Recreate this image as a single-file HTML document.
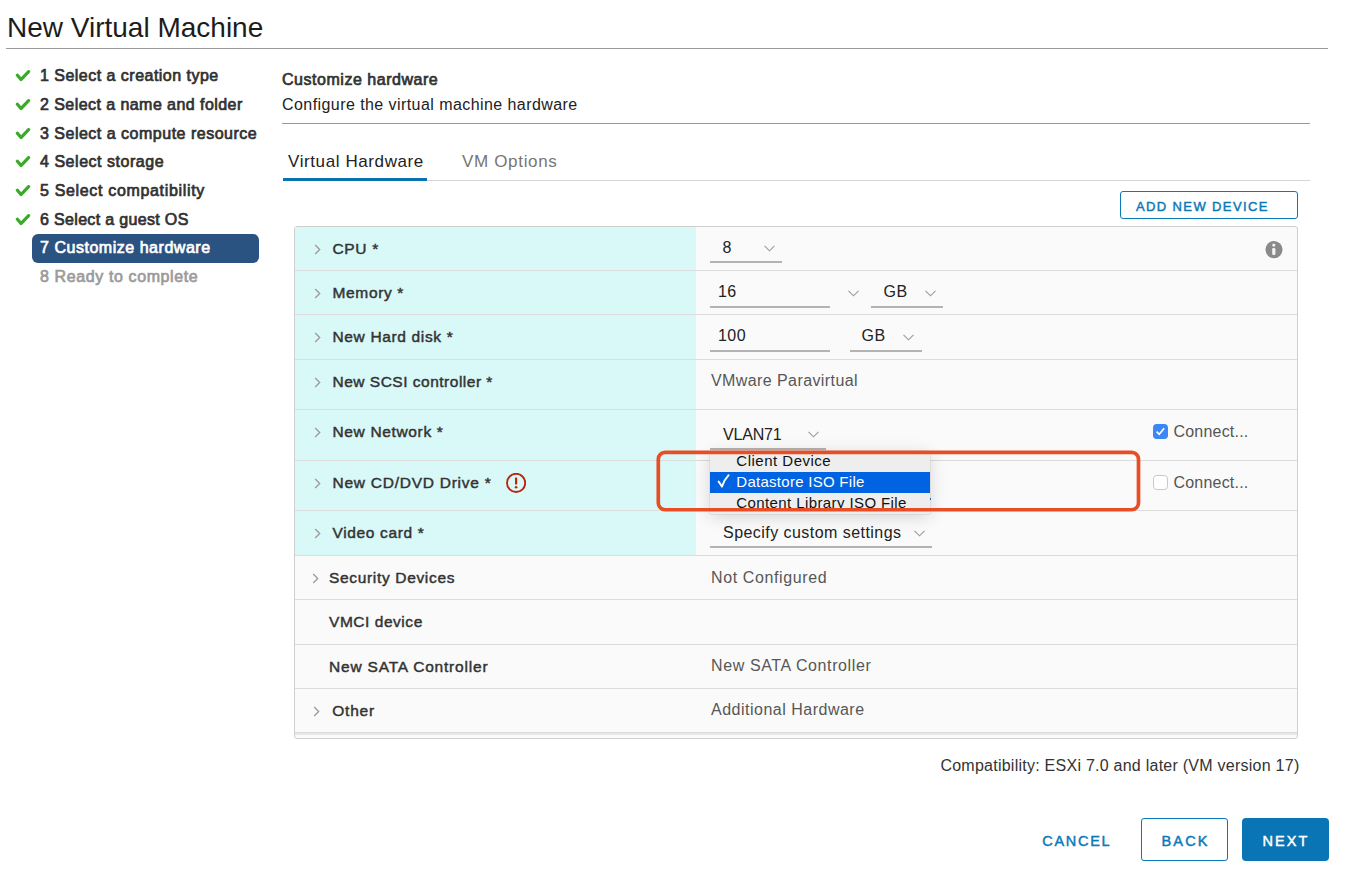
<!DOCTYPE html>
<html><head><meta charset="utf-8"><style>
html,body{margin:0;padding:0;width:1350px;height:877px;overflow:hidden;background:#fff;}
body{position:relative;font-family:"Liberation Sans", sans-serif;}
.t{position:absolute;white-space:nowrap;line-height:1;}
.r{position:absolute;}
</style></head><body>
<div class="t " style="left:7px;top:13.50px;font-size:28px;color:#1c1c1c;">New Virtual Machine</div>
<div class="r" style="left:6px;top:48px;width:1322px;height:1px;background:#9a9a9a"></div>
<div class="r" style="left:32px;top:234px;width:227px;height:28.8px;background:#2b5381;border-radius:6px"></div>
<div class="t nav" style="left:40px;top:68.16px;font-size:16px;font-weight:400;-webkit-text-stroke:0.7px currentColor;color:#313131;letter-spacing:0.479px;">1 Select a creation type</div>
<svg class="r" style="left:15px;top:70.3px" width="16" height="12" viewBox="0 0 16 12"><path d="M2.4 5.2 L6 9.6 L13.6 1.6" fill="none" stroke="#3aab28" stroke-width="3.2" stroke-linejoin="round" stroke-linecap="round"/></svg>
<div class="t nav" style="left:40px;top:96.86px;font-size:16px;font-weight:400;-webkit-text-stroke:0.7px currentColor;color:#313131;letter-spacing:0.44px;">2 Select a name and folder</div>
<svg class="r" style="left:15px;top:99.0px" width="16" height="12" viewBox="0 0 16 12"><path d="M2.4 5.2 L6 9.6 L13.6 1.6" fill="none" stroke="#3aab28" stroke-width="3.2" stroke-linejoin="round" stroke-linecap="round"/></svg>
<div class="t nav" style="left:40px;top:125.56px;font-size:16px;font-weight:400;-webkit-text-stroke:0.7px currentColor;color:#313131;letter-spacing:0.5px;">3 Select a compute resource</div>
<svg class="r" style="left:15px;top:127.7px" width="16" height="12" viewBox="0 0 16 12"><path d="M2.4 5.2 L6 9.6 L13.6 1.6" fill="none" stroke="#3aab28" stroke-width="3.2" stroke-linejoin="round" stroke-linecap="round"/></svg>
<div class="t nav" style="left:40px;top:154.26px;font-size:16px;font-weight:400;-webkit-text-stroke:0.7px currentColor;color:#313131;letter-spacing:0.533px;">4 Select storage</div>
<svg class="r" style="left:15px;top:156.4px" width="16" height="12" viewBox="0 0 16 12"><path d="M2.4 5.2 L6 9.6 L13.6 1.6" fill="none" stroke="#3aab28" stroke-width="3.2" stroke-linejoin="round" stroke-linecap="round"/></svg>
<div class="t nav" style="left:40px;top:182.96px;font-size:16px;font-weight:400;-webkit-text-stroke:0.7px currentColor;color:#313131;letter-spacing:0.667px;">5 Select compatibility</div>
<svg class="r" style="left:15px;top:185.1px" width="16" height="12" viewBox="0 0 16 12"><path d="M2.4 5.2 L6 9.6 L13.6 1.6" fill="none" stroke="#3aab28" stroke-width="3.2" stroke-linejoin="round" stroke-linecap="round"/></svg>
<div class="t nav" style="left:40px;top:211.66px;font-size:16px;font-weight:400;-webkit-text-stroke:0.7px currentColor;color:#313131;letter-spacing:0.334px;">6 Select a guest OS</div>
<svg class="r" style="left:15px;top:213.8px" width="16" height="12" viewBox="0 0 16 12"><path d="M2.4 5.2 L6 9.6 L13.6 1.6" fill="none" stroke="#3aab28" stroke-width="3.2" stroke-linejoin="round" stroke-linecap="round"/></svg>
<div class="t nav" style="left:40px;top:240.36px;font-size:16px;font-weight:400;-webkit-text-stroke:0.7px currentColor;color:#fff;letter-spacing:0.526px;">7 Customize hardware</div>
<div class="t nav" style="left:40px;top:269.06px;font-size:16px;font-weight:400;-webkit-text-stroke:0.7px currentColor;color:#9b9b9b;letter-spacing:0.61px;">8 Ready to complete</div>
<div class="t hdr" style="left:282px;top:72.36px;font-size:16px;font-weight:400;-webkit-text-stroke:0.7px currentColor;color:#333;letter-spacing:0.53px;">Customize hardware</div>
<div class="t sub" style="left:282px;top:97.16px;font-size:16px;color:#222;letter-spacing:0.432px;">Configure the virtual machine hardware</div>
<div class="r" style="left:282px;top:123px;width:1028px;height:1px;background:#9a9a9a"></div>
<div class="t tab1" style="left:288px;top:153.41px;font-size:17px;color:#222;letter-spacing:0.6px;">Virtual Hardware</div>
<div class="t tab2" style="left:462px;top:153.41px;font-size:17px;color:#767676;letter-spacing:0.667px;">VM Options</div>
<div class="r" style="left:283px;top:180px;width:1027px;height:1px;background:#d6d6d6"></div>
<div class="r" style="left:283px;top:178px;width:144px;height:3px;background:#0a72b0"></div>
<div class="r" style="left:1120px;top:191px;width:178px;height:28px;border:1px solid #0a79b8;border-radius:3px;box-sizing:border-box;background:#fff"></div>
<div class="t btn" style="left:1136px;top:199.50px;font-size:13px;font-weight:400;-webkit-text-stroke:0.45px currentColor;color:#0a79b8;letter-spacing:1.385px;">ADD NEW DEVICE</div>
<div class="r" style="left:294px;top:226px;width:1004px;height:513px;border:1px solid #cfcfcf;border-radius:3px;box-sizing:border-box;background:#fafafa"></div>
<div class="r" style="left:295px;top:227px;width:401px;height:328px;background:#d9f8f8"></div>
<div class="r" style="left:295px;top:270px;width:1002px;height:1px;background:#dcdcdc"></div>
<div class="r" style="left:295px;top:314px;width:1002px;height:1px;background:#dcdcdc"></div>
<div class="r" style="left:295px;top:359px;width:1002px;height:1px;background:#dcdcdc"></div>
<div class="r" style="left:295px;top:409px;width:1002px;height:1px;background:#dcdcdc"></div>
<div class="r" style="left:295px;top:460px;width:1002px;height:1px;background:#dcdcdc"></div>
<div class="r" style="left:295px;top:510px;width:1002px;height:1px;background:#dcdcdc"></div>
<div class="r" style="left:295px;top:555px;width:1002px;height:1px;background:#dcdcdc"></div>
<div class="r" style="left:295px;top:599px;width:1002px;height:1px;background:#dcdcdc"></div>
<div class="r" style="left:295px;top:644px;width:1002px;height:1px;background:#dcdcdc"></div>
<div class="r" style="left:295px;top:688px;width:1002px;height:1px;background:#dcdcdc"></div>
<div class="r" style="left:295px;top:732px;width:1002px;height:1px;background:#dcdcdc"></div>
<div class="r" style="left:295px;top:733px;width:1002px;height:1.5px;background:#e8e8e8"></div>
<div class="t lab" style="left:332.5px;top:240.78px;font-size:15.5px;font-weight:400;-webkit-text-stroke:0.45px currentColor;color:#333;letter-spacing:0.65px;">CPU *</div>
<svg class="r" style="left:313.5px;top:244px" width="7" height="11" viewBox="0 0 7 11"><path d="M1.2 1 L5.7 5.5 L1.2 10" fill="none" stroke="#9a9a9a" stroke-width="1.3"/></svg>
<div class="t lab" style="left:332.5px;top:284.78px;font-size:15.5px;font-weight:400;-webkit-text-stroke:0.45px currentColor;color:#333;letter-spacing:0.65px;">Memory *</div>
<svg class="r" style="left:313.5px;top:288px" width="7" height="11" viewBox="0 0 7 11"><path d="M1.2 1 L5.7 5.5 L1.2 10" fill="none" stroke="#9a9a9a" stroke-width="1.3"/></svg>
<div class="t lab" style="left:332.5px;top:328.78px;font-size:15.5px;font-weight:400;-webkit-text-stroke:0.45px currentColor;color:#333;letter-spacing:0.65px;">New Hard disk *</div>
<svg class="r" style="left:313.5px;top:332px" width="7" height="11" viewBox="0 0 7 11"><path d="M1.2 1 L5.7 5.5 L1.2 10" fill="none" stroke="#9a9a9a" stroke-width="1.3"/></svg>
<div class="t lab" style="left:332.5px;top:373.78px;font-size:15.5px;font-weight:400;-webkit-text-stroke:0.45px currentColor;color:#333;letter-spacing:0.5px;">New SCSI controller *</div>
<svg class="r" style="left:313.5px;top:377px" width="7" height="11" viewBox="0 0 7 11"><path d="M1.2 1 L5.7 5.5 L1.2 10" fill="none" stroke="#9a9a9a" stroke-width="1.3"/></svg>
<div class="t lab" style="left:332.5px;top:423.78px;font-size:15.5px;font-weight:400;-webkit-text-stroke:0.45px currentColor;color:#333;letter-spacing:0.65px;">New Network *</div>
<svg class="r" style="left:313.5px;top:427px" width="7" height="11" viewBox="0 0 7 11"><path d="M1.2 1 L5.7 5.5 L1.2 10" fill="none" stroke="#9a9a9a" stroke-width="1.3"/></svg>
<div class="t lab" style="left:332.5px;top:474.78px;font-size:15.5px;font-weight:400;-webkit-text-stroke:0.45px currentColor;color:#333;letter-spacing:0.746px;">New CD/DVD Drive *</div>
<svg class="r" style="left:313.5px;top:478px" width="7" height="11" viewBox="0 0 7 11"><path d="M1.2 1 L5.7 5.5 L1.2 10" fill="none" stroke="#9a9a9a" stroke-width="1.3"/></svg>
<div class="t lab" style="left:332.5px;top:524.78px;font-size:15.5px;font-weight:400;-webkit-text-stroke:0.45px currentColor;color:#333;letter-spacing:0.65px;">Video card *</div>
<svg class="r" style="left:313.5px;top:528px" width="7" height="11" viewBox="0 0 7 11"><path d="M1.2 1 L5.7 5.5 L1.2 10" fill="none" stroke="#9a9a9a" stroke-width="1.3"/></svg>
<div class="t lab" style="left:329px;top:569.78px;font-size:15.5px;font-weight:400;-webkit-text-stroke:0.45px currentColor;color:#333;letter-spacing:0.667px;">Security Devices</div>
<svg class="r" style="left:312.2px;top:573px" width="7" height="11" viewBox="0 0 7 11"><path d="M1.2 1 L5.7 5.5 L1.2 10" fill="none" stroke="#9a9a9a" stroke-width="1.3"/></svg>
<div class="t lab" style="left:329px;top:613.78px;font-size:15.5px;font-weight:400;-webkit-text-stroke:0.45px currentColor;color:#333;letter-spacing:0.54px;">VMCI device</div>
<div class="t lab" style="left:329px;top:658.78px;font-size:15.5px;font-weight:400;-webkit-text-stroke:0.45px currentColor;color:#333;letter-spacing:0.8px;">New SATA Controller</div>
<div class="t lab" style="left:332.3px;top:702.78px;font-size:15.5px;font-weight:400;-webkit-text-stroke:0.45px currentColor;color:#333;letter-spacing:0.75px;">Other</div>
<svg class="r" style="left:313.4px;top:706px" width="7" height="11" viewBox="0 0 7 11"><path d="M1.2 1 L5.7 5.5 L1.2 10" fill="none" stroke="#9a9a9a" stroke-width="1.3"/></svg>
<div class="t " style="left:722.4px;top:240.26px;font-size:16px;color:#222;letter-spacing:0.45px;">8</div>
<svg class="r" style="left:764px;top:245px" width="11" height="7" viewBox="0 0 11 7"><path d="M0.5 0.8 L5.5 5.8 L10.5 0.8" fill="none" stroke="#9c9c9c" stroke-width="1.1"/></svg>
<div class="r" style="left:710px;top:261px;width:72px;height:2px;background:#b3b3b3"></div>
<svg class="r" style="left:1265px;top:241px" width="18" height="18" viewBox="0 0 18 18"><circle cx="9" cy="8.6" r="8.55" fill="#8a8a8a"/><circle cx="8.8" cy="4.1" r="1.6" fill="#f2f2f2"/><rect x="7.2" y="7.1" width="3.2" height="6.8" rx="1.2" fill="#f2f2f2"/></svg>
<div class="t " style="left:718px;top:284.26px;font-size:16px;color:#222;letter-spacing:0.45px;">16</div>
<div class="r" style="left:710px;top:305.5px;width:120px;height:2px;background:#b3b3b3"></div>
<svg class="r" style="left:847.5px;top:289.5px" width="11" height="7" viewBox="0 0 11 7"><path d="M0.5 0.8 L5.5 5.8 L10.5 0.8" fill="none" stroke="#9c9c9c" stroke-width="1.1"/></svg>
<div class="t " style="left:883.6px;top:284.26px;font-size:16px;color:#222;letter-spacing:0.45px;">GB</div>
<svg class="r" style="left:924.5px;top:289.5px" width="11" height="7" viewBox="0 0 11 7"><path d="M0.5 0.8 L5.5 5.8 L10.5 0.8" fill="none" stroke="#9c9c9c" stroke-width="1.1"/></svg>
<div class="r" style="left:871px;top:305.5px;width:72px;height:2px;background:#b3b3b3"></div>
<div class="t " style="left:718px;top:328.36px;font-size:16px;color:#222;letter-spacing:0.45px;">100</div>
<div class="r" style="left:710px;top:349.5px;width:120px;height:2px;background:#b3b3b3"></div>
<div class="t " style="left:861.6px;top:328.36px;font-size:16px;color:#222;letter-spacing:0.45px;">GB</div>
<svg class="r" style="left:903px;top:333.5px" width="11" height="7" viewBox="0 0 11 7"><path d="M0.5 0.8 L5.5 5.8 L10.5 0.8" fill="none" stroke="#9c9c9c" stroke-width="1.1"/></svg>
<div class="r" style="left:849.5px;top:349.5px;width:72px;height:2px;background:#b3b3b3"></div>
<div class="t " style="left:711px;top:373.06px;font-size:16px;color:#575757;letter-spacing:0.412px;">VMware Paravirtual</div>
<div class="t " style="left:723px;top:426.66px;font-size:16px;color:#222;letter-spacing:-0.2px;">VLAN71</div>
<svg class="r" style="left:807.5px;top:431px" width="11" height="7" viewBox="0 0 11 7"><path d="M0.5 0.8 L5.5 5.8 L10.5 0.8" fill="none" stroke="#9c9c9c" stroke-width="1.1"/></svg>
<div class="r" style="left:710px;top:448px;width:116px;height:2px;background:#b3b3b3"></div>
<div class="r" style="left:1153px;top:424px;width:14.5px;height:14.5px;background:#3b87f6;border-radius:3.8px"></div>
<svg class="r" style="left:1153px;top:424px" width="15" height="15" viewBox="0 0 15 15"><path d="M3.6 7.6 L6.2 10.3 L11.2 4.2" fill="none" stroke="#fff" stroke-width="1.6"/></svg>
<div class="t " style="left:1173.4px;top:423.56px;font-size:16px;color:#555;letter-spacing:0.222px;">Connect...</div>
<div class="r" style="left:1153px;top:475px;width:14.5px;height:14.5px;background:#fff;border:1px solid #c8c8c8;border-radius:3.8px;box-sizing:border-box"></div>
<div class="t " style="left:1173.4px;top:474.56px;font-size:16px;color:#555;letter-spacing:0.222px;">Connect...</div>
<svg class="r" style="left:506px;top:473.4px" width="20" height="20" viewBox="0 0 20 20"><circle cx="10.1" cy="9.9" r="9.1" fill="none" stroke="#b9280c" stroke-width="1.9"/><rect x="9" y="4.6" width="2.2" height="7" rx="0.5" fill="#b9280c"/><circle cx="10.1" cy="14.3" r="1.3" fill="#b9280c"/></svg>
<div class="t " style="left:723px;top:524.76px;font-size:16px;color:#222;letter-spacing:0.455px;">Specify custom settings</div>
<svg class="r" style="left:914px;top:530px" width="11" height="7" viewBox="0 0 11 7"><path d="M0.5 0.8 L5.5 5.8 L10.5 0.8" fill="none" stroke="#9c9c9c" stroke-width="1.1"/></svg>
<div class="r" style="left:710px;top:546px;width:222px;height:2px;background:#b3b3b3"></div>
<div class="t " style="left:711px;top:569.56px;font-size:16px;color:#575757;letter-spacing:0.615px;">Not Configured</div>
<div class="t " style="left:711px;top:658.06px;font-size:16px;color:#575757;letter-spacing:0.611px;">New SATA Controller</div>
<div class="t " style="left:711px;top:702.36px;font-size:16px;color:#575757;letter-spacing:0.5px;">Additional Hardware</div>
<div class="r" style="left:710px;top:450.5px;width:220px;height:63.5px;background:#eeeeee;box-shadow:0 3px 16px rgba(0,0,0,0.15), 0 0 1px rgba(0,0,0,0.3);"></div>
<div class="r" style="left:710px;top:471.5px;width:220px;height:21.5px;background:#0063e1"></div>
<div class="t " style="left:736.3px;top:453.10px;font-size:15px;color:#111;letter-spacing:0.5px;">Client Device</div>
<svg class="r" style="left:716px;top:473px" width="14" height="16" viewBox="0 0 14 16"><path d="M2.6 8.6 Q4.2 10.6 5.9 13.6 Q8.6 6.4 12.6 2.2" fill="none" stroke="#fff" stroke-width="1.9" stroke-linecap="round" stroke-linejoin="round"/></svg>
<div class="t " style="left:736.3px;top:474.30px;font-size:15px;color:#fff;letter-spacing:0.276px;">Datastore ISO File</div>
<div class="r" style="left:710px;top:493px;width:220px;height:19px;overflow:hidden"><div class="t" style="left:26.3px;top:2.10px;font-size:15px;letter-spacing:0.4px;color:#111">Content Library ISO File</div></div>
<div class="r" style="left:930.2px;top:497.8px;width:1.3px;height:2.6px;background:#0079b8"></div>
<svg class="r" style="left:650px;top:444px" width="500" height="76" viewBox="0 0 500 76"><rect x="8.3" y="8.35" width="480.2" height="57.4" rx="6.8" fill="none" stroke="#e84e25" stroke-width="3.7"/></svg>
<div class="t " style="left:940.4px;top:757.76px;font-size:16px;color:#333;letter-spacing:0.25px;">Compatibility: ESXi 7.0 and later (VM version 17)</div>
<div class="t " style="left:1042.3px;top:834.43px;font-size:14.5px;font-weight:400;-webkit-text-stroke:0.45px currentColor;color:#0a79b8;letter-spacing:1.7px;">CANCEL</div>
<div class="r" style="left:1141px;top:818px;width:86.5px;height:43px;border:1px solid #0a79b8;border-radius:3px;box-sizing:border-box"></div>
<div class="t " style="left:1161.5px;top:834.43px;font-size:14.5px;font-weight:400;-webkit-text-stroke:0.45px currentColor;color:#0a79b8;letter-spacing:2.167px;">BACK</div>
<div class="r" style="left:1242px;top:818px;width:86.5px;height:43.2px;background:#0a75b4;border-radius:4px"></div>
<div class="t " style="left:1262.4px;top:834.43px;font-size:14.5px;font-weight:400;-webkit-text-stroke:0.45px currentColor;color:#fff;letter-spacing:2.068px;">NEXT</div>
</body></html>
